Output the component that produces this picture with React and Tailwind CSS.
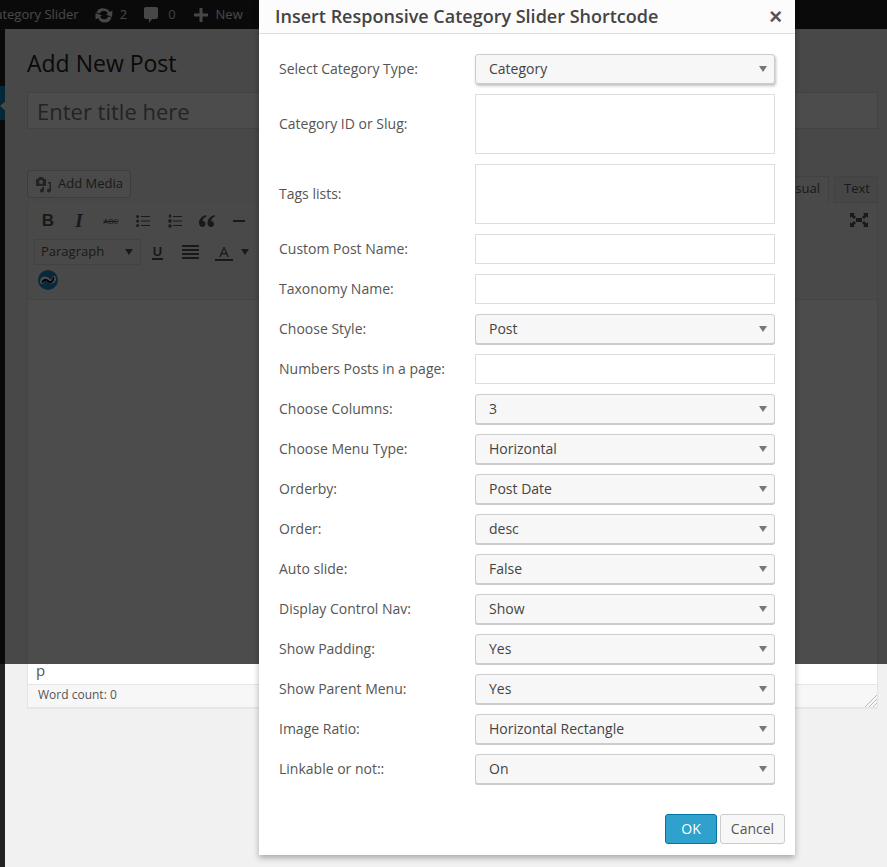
const FONT = "font-['Open_Sans','Noto_Sans',sans-serif]";

const rows = [
  { label: "Select Category Type:", type: "select", value: "Category", focus: true },
  { label: "Category ID or Slug:", type: "area" },
  { label: "Tags lists:", type: "area" },
  { label: "Custom Post Name:", type: "input" },
  { label: "Taxonomy Name:", type: "input" },
  { label: "Choose Style:", type: "select", value: "Post" },
  { label: "Numbers Posts in a page:", type: "input" },
  { label: "Choose Columns:", type: "select", value: "3" },
  { label: "Choose Menu Type:", type: "select", value: "Horizontal" },
  { label: "Orderby:", type: "select", value: "Post Date" },
  { label: "Order:", type: "select", value: "desc" },
  { label: "Auto slide:", type: "select", value: "False" },
  { label: "Display Control Nav:", type: "select", value: "Show" },
  { label: "Show Padding:", type: "select", value: "Yes" },
  { label: "Show Parent Menu:", type: "select", value: "Yes" },
  { label: "Image Ratio:", type: "select", value: "Horizontal Rectangle" },
  { label: "Linkable or not::", type: "select", value: "On" },
];

function Caret({ className = "" }) {
  return (
    <svg width="8" height="6" viewBox="0 0 8 6" className={className}>
      <path d="M0 0h8L4 6z" fill="currentColor" />
    </svg>
  );
}

function Field({ row }) {
  if (row.type === "select") {
    return (
      <div
        className={`flex h-[30px] w-[300px] items-center justify-between rounded-[3px] border border-[#cccccc] bg-[#f7f7f7] pl-[13px] pr-[7px] text-[14px] text-[#444444] ${
          row.focus ? "shadow-[1px_2px_3px_rgba(0,0,0,0.25)]" : "shadow-[0_1px_0_#cccccc]"
        }`}
      >
        <span className="pb-[2px]">{row.value}</span>
        <Caret className="text-[#777777]" />
      </div>
    );
  }
  return (
    <div
      className={`w-[300px] border border-[#dddddd] bg-white ${row.type === "area" ? "h-[60px]" : "h-[30px]"}`}
    />
  );
}

function Toolbar() {
  return (
    <div className="h-[97px] border-b border-[#e5e5e5] bg-[#f5f5f5] px-[6px] text-[#555555]">
      <div className="flex h-[36px] items-center">
        <span className="w-[28px] text-center font-['Liberation_Sans'] text-[17px] font-bold">B</span>
        <span className="ml-[3px] w-[28px] text-center font-['Liberation_Serif'] text-[19px] font-bold italic">I</span>
        <span className="ml-[4px] w-[28px] text-center text-[8px] font-normal line-through">ABC</span>
        <svg width="14" height="14" viewBox="0 0 14 14" className="ml-[11px]" fill="currentColor">
          <circle cx="1.6" cy="2.5" r="1.5" /><circle cx="1.6" cy="7" r="1.5" /><circle cx="1.6" cy="11.5" r="1.5" />
          <rect x="5" y="2" width="9" height="1" /><rect x="5" y="6.5" width="9" height="1" /><rect x="5" y="11" width="9" height="1" />
        </svg>
        <svg width="14" height="14" viewBox="0 0 14 14" className="ml-[18px]" fill="currentColor">
          <rect x="1" y="0.5" width="2" height="3" /><rect x="0.5" y="5.5" width="3" height="3" /><rect x="0.5" y="10.5" width="3" height="3" />
          <rect x="5" y="2" width="9" height="1" /><rect x="5" y="6.5" width="9" height="1" /><rect x="5" y="11" width="9" height="1" />
        </svg>
        <svg width="16" height="12" viewBox="0 0 16 12" className="ml-[17px]" fill="currentColor">
          <path d="M7 0C3 1 0 4 0 8c0 2.300 1.400 4 3.400 4C5.200 12 6.500 10.700 6.500 9S5.200 6 3.700 6c0-2 1.500-3.700 3.800-4.500zM15.500 0c-4 1-7 4-7 8 0 2.300 1.400 4 3.400 4 1.800 0 3.100-1.300 3.100-3s-1.300-3-2.800-3c0-2 1.500-3.700 3.800-4.500z" />
        </svg>
        <span className="ml-[18px] h-[2px] w-[12px] bg-current" />
      </div>
      <div className="flex h-[26px] items-center">
        <div className="flex h-[26px] w-[107px] items-center justify-between border border-[#dddddd] pl-[6px] pr-[7px] text-[13px]">
          <span>Paragraph</span>
          <Caret />
        </div>
        <span className="ml-[11px] w-[11px] border-b-2 border-current text-center font-['Liberation_Sans'] text-[13px] font-bold leading-[13px]">U</span>
        <svg width="17" height="14" viewBox="0 0 17 14" className="ml-[19px]" fill="currentColor">
          <rect width="17" height="2" /><rect y="4" width="17" height="2" /><rect y="8" width="17" height="2" /><rect y="12" width="17" height="2" />
        </svg>
        <span className="ml-[16px] w-[18px] border-b-2 border-current text-center text-[15px] leading-[15px]">A</span>
        <Caret className="ml-[8px]" />
      </div>
      <div className="flex h-[35px] items-start pl-[4px] pt-[5px]">
        <svg width="20" height="20" viewBox="0 0 20 20">
          <circle cx="10" cy="10" r="10" fill="#2388c8" />
          <path d="M4 12c0-4 3.500-4.500 6-2s6 2 6-2" fill="none" stroke="#ffffff" strokeWidth="4" strokeLinecap="round" />
          <path d="M4.500 12c.5-2.500 3.500-3 5.500-1s5 1.500 5.500-3" fill="none" stroke="#000000" strokeWidth="1.800" strokeLinecap="round" />
        </svg>
      </div>
    </div>
  );
}

function WordPress() {
  return (
    <div className="flex h-[867px] w-[887px] flex-col overflow-hidden bg-[#f1f1f1]">
      <div className="flex h-[29px] shrink-0 items-center bg-[#222222] text-[13px] text-[#eeeeee]">
        <span className="ml-[-13px] whitespace-nowrap">Category Slider</span>
        <svg width="18" height="16" viewBox="0 0 18 16" className="ml-[16px]" fill="currentColor">
          <path d="M9 1.500a6.500 6.500 0 0 1 5.800 3.600L17.500 3.500 17 10 11 7.500l2-1.200A4.600 4.600 0 0 0 4.600 6.500L1.500 5.500A7 7 0 0 1 9 1.500zM.5 6 7 8.500l-2 1.200a4.600 4.600 0 0 0 8.400-.2l3.100 1A7 7 0 0 1 3.200 10.900L.5 12.500z" />
        </svg>
        <span className="ml-[7px]">2</span>
        <svg width="14" height="16" viewBox="0 0 14 16" className="ml-[17px]" fill="currentColor">
          <path d="M2 0h10a2 2 0 0 1 2 2v8a2 2 0 0 1-2 2H8l-3 4v-4H2a2 2 0 0 1-2-2V2a2 2 0 0 1 2-2z" />
        </svg>
        <span className="ml-[10px] text-[#dddddd]">0</span>
        <svg width="14" height="14" viewBox="0 0 14 14" className="ml-[18px]" fill="currentColor">
          <path d="M5.500 0h3v5.500H14v3H8.500V14h-3V8.500H0v-3h5.500z" />
        </svg>
        <span className="ml-[8px]">New</span>
      </div>
      <div className="flex min-h-0 flex-1">
        <div className="w-[5px] shrink-0 bg-[#222222] pt-[57px]">
          <svg width="5" height="34" viewBox="0 0 5 34" className="block">
            <path d="M0 0h5v15.500L0 20l5 4.500V34H0z" fill="#0a85bd" />
            <path d="M5 15.500 0 20l5 4.500z" fill="#f1f1f1" />
          </svg>
        </div>
        <div className="min-w-0 flex-1 pl-[22px] pr-[9px] pt-[20px]">
          <div className="h-[29px] text-[23px] leading-[29px] text-[#222222]">Add New Post</div>
          <div className="mt-[14px] flex h-[37px] items-center border border-[#dddddd] bg-white px-[9px] pt-[1px] text-[22px] text-[#777777]">
            Enter title here
          </div>
          <div className="mt-[41px] flex items-end justify-between">
            <div className="mb-[5px] flex h-[28px] w-[104px] items-center rounded-[3px] border border-[#cccccc] bg-[#f7f7f7] pl-[7px] text-[13px] text-[#555555]">
              <svg width="17" height="17" viewBox="0 0 17 17" fill="currentColor" className="text-[#777777]">
                <path d="M1 3h2l1-2h4l1 2h2v7H1zM6 4a2 2 0 1 0 0 4 2 2 0 0 0 0-4zM13 6h3v8.500a2 2 0 1 1-1.500-1.900V7.500H13zM7 11h2v3.500a2 2 0 1 1-1.500-1.900z" />
              </svg>
              <span className="ml-[6px]">Add Media</span>
            </div>
            <div className="flex text-[13px] text-[#555555]">
              <div className="flex h-[27px] w-[42px] items-center justify-end border border-b-0 border-[#dddddd] bg-[#f5f5f5] pb-[2px] pr-[8px]">Visual</div>
              <div className="ml-[5px] flex h-[27px] w-[44px] items-center justify-center border border-[#dddddd] bg-[#ebebeb] pb-[2px] pl-[2px]">Text</div>
            </div>
          </div>
          <div className="relative mt-0 border border-t-0 border-[#e5e5e5] shadow-[0_1px_1px_rgba(0,0,0,0.04)]">
            <Toolbar />
            <svg width="18" height="14" viewBox="0 0 18 14" className="absolute right-[9px] top-[10px] text-[#555555]" fill="currentColor">
              <path d="M0 0h5L3.500 1.500 6 4 4 6 1.500 3.500 0 5zM18 0v5l-1.500-1.500L14 6l-2-2 2.500-2.500L13 0zM0 14V9l1.500 1.500L4 8l2 2-2.500 2.500L5 14zM18 14h-5l1.500-1.500L12 10l2-2 2.500 2.500L18 9zM6 5h6v4H6z" />
            </svg>
            <div className="flex h-[384px] items-end bg-white pb-[2px] pl-[8px] text-[15px] leading-[24px] text-[#555555]">p</div>
            <div className="relative flex h-[23px] items-center border-t border-[#e5e5e5] bg-[#f7f7f7] pb-[2px] pl-[10px] text-[12px] text-[#555555]">
              Word count: 0
              <svg width="12" height="12" viewBox="0 0 12 12" className="absolute bottom-0 right-0 text-[#aaaaaa]" stroke="currentColor" strokeWidth="0.8">
                <path d="M0 12 12 0M4 12l8-8M8 12l4-4" />
              </svg>
            </div>
          </div>
        </div>
      </div>
    </div>
  );
}

export default function App() {
  return (
    <div className={`relative h-[867px] w-[887px] overflow-hidden ${FONT}`}>
      <WordPress />
      <div className="absolute left-0 top-0 h-[664px] w-full bg-black/70" />
      <div className="absolute left-[259px] top-0 flex h-[855px] w-[536px] flex-col bg-white shadow-[0_3px_6px_rgba(0,0,0,0.3)]">
        <div className="flex h-[34px] shrink-0 items-center justify-between border-b border-[#dddddd] bg-[#fcfcfc] pl-[16px] pr-[13px]">
          <span className="text-[18px] font-semibold text-[#444444]">Insert Responsive Category Slider Shortcode</span>
          <span className="font-['Liberation_Sans'] text-[22px] font-bold leading-none text-[#555555]">×</span>
        </div>
        <div className="flex flex-col gap-[10px] pl-[20px] pt-[20px]">
          {rows.map((row) => (
            <div key={row.label} className="flex items-center">
              <div className="w-[196px] pb-[2px] text-[14px] text-[#555555]">{row.label}</div>
              <Field row={row} />
            </div>
          ))}
        </div>
        <div className="mt-auto flex justify-end gap-[3px] pb-[11px] pr-[10px]">
          <div className="flex h-[30px] w-[52px] items-center justify-center rounded-[3px] border border-[#0074a2] bg-[#2ea2cc] pb-[2px] text-[14px] text-white">OK</div>
          <div className="flex h-[30px] w-[65px] items-center justify-center rounded-[3px] border border-[#cccccc] bg-[#f7f7f7] pb-[2px] text-[14px] text-[#555555]">Cancel</div>
        </div>
      </div>
    </div>
  );
}
